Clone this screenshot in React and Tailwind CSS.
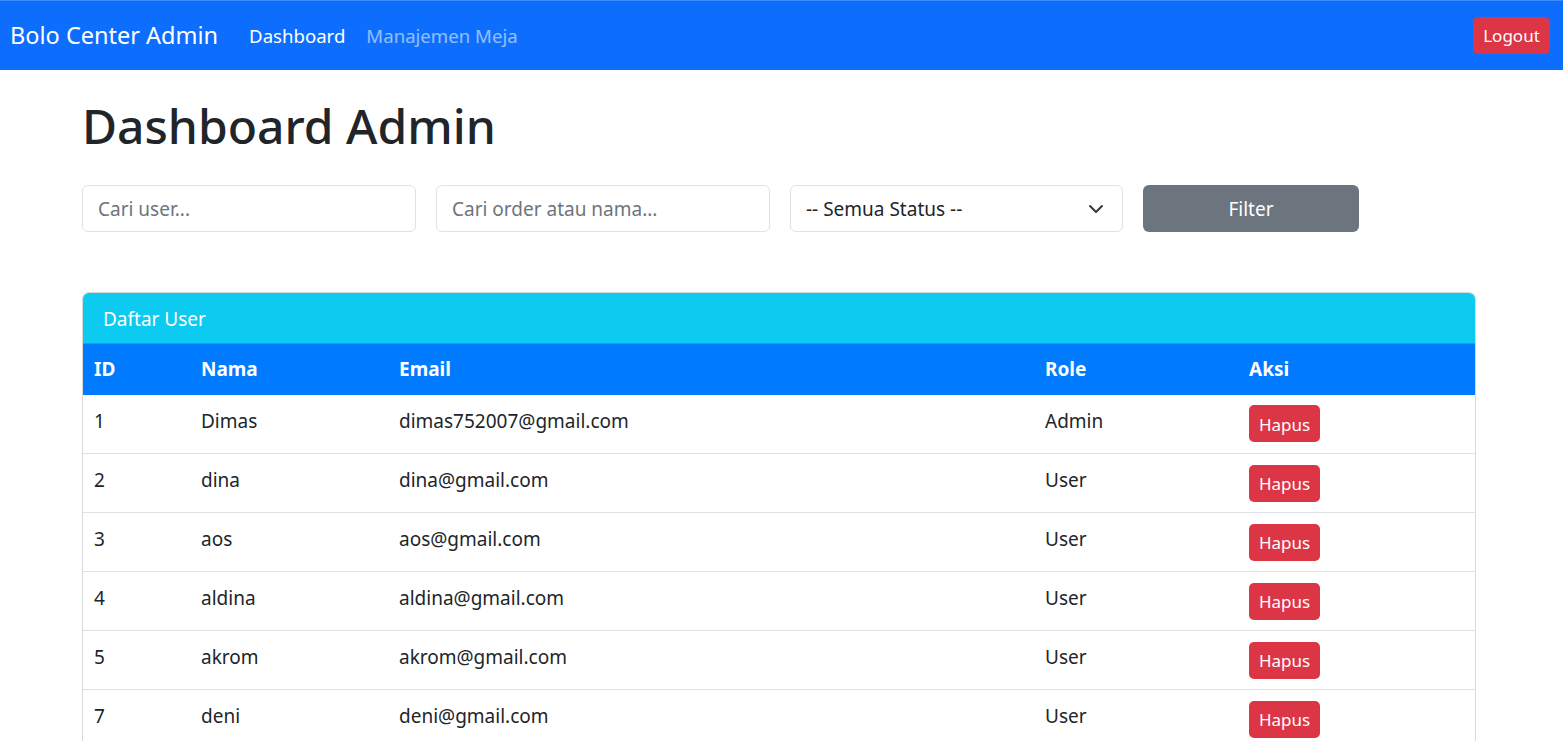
import React from 'react'

const users = [
  { id: 1, nama: 'Dimas', email: 'dimas752007@gmail.com', role: 'Admin' },
  { id: 2, nama: 'dina', email: 'dina@gmail.com', role: 'User' },
  { id: 3, nama: 'aos', email: 'aos@gmail.com', role: 'User' },
  { id: 4, nama: 'aldina', email: 'aldina@gmail.com', role: 'User' },
  { id: 5, nama: 'akrom', email: 'akrom@gmail.com', role: 'User' },
  { id: 7, nama: 'deni', email: 'deni@gmail.com', role: 'User' },
]

const App = () => {
  return (
    <div className="min-h-screen bg-white text-[#212529] font-['Noto_Sans',sans-serif]">
      <nav className="flex h-[70px] items-center bg-[#0d6efd] border-t border-[#3d8bfd] pl-[10px] pr-[13px]">
        <span className="text-[23.5px] text-white mr-[31px] pt-[1px]">Bolo Center Admin</span>
        <div className="flex gap-[21px] text-[18.6px] pt-[1px]">
          <span className="text-white">Dashboard</span>
          <span className="text-white/55">Manajemen Meja</span>
        </div>
        <button className="ml-auto h-[37px] w-[77px] rounded-[5px] bg-[#dc3545] text-[17px] text-white">
          Logout
        </button>
      </nav>

      <main className="pl-[82px] pt-[27px] pb-[40px] w-[1476px]">
        <h1 className="text-[48px] font-medium leading-[1.2] mb-[30px]">Dashboard Admin</h1>

        <div className="flex gap-[20px] mb-[60px]">
          <input
            className="h-[47px] w-[334px] rounded-[6px] border border-[#dee2e6] px-[15px] pt-[2px] text-[19px] placeholder:text-[#6c757d] outline-none"
            placeholder="Cari user..."
          />
          <input
            className="h-[47px] w-[334px] rounded-[6px] border border-[#dee2e6] px-[15px] pt-[2px] text-[19px] placeholder:text-[#6c757d] outline-none"
            placeholder="Cari order atau nama..."
          />
          <div className="flex h-[47px] w-[333px] items-center justify-between rounded-[6px] border border-[#dee2e6] pl-[15px] pr-[18px] pt-[2px] text-[19px]">
            <span>-- Semua Status --</span>
            <svg width="16" height="16" viewBox="0 0 16 16" fill="none" stroke="#343a40" strokeWidth="2" strokeLinecap="round" strokeLinejoin="round">
              <path d="M2 5l6 6 6-6" />
            </svg>
          </div>
          <button className="h-[47px] w-[216px] rounded-[6px] bg-[#6c757d] pt-[2px] text-[19px] text-white">Filter</button>
        </div>

        <div className="w-[1394px] overflow-hidden rounded-[7px] border border-black/15">
          <div className="h-[51px] flex items-center bg-[#0dcaf0] px-[20px] pt-[3px] text-[19px] text-white border-b border-black/15">
            Daftar User
          </div>
          <table className="w-full table-fixed border-collapse text-[19px]">
            <colgroup>
              <col className="w-[107px]" />
              <col className="w-[198px]" />
              <col className="w-[646px]" />
              <col className="w-[204px]" />
              <col />
            </colgroup>
            <thead>
              <tr className="h-[51px] bg-[#007bff] text-white text-left">
                <th className="px-[11px] font-bold">ID</th>
                <th className="px-[11px] font-bold">Nama</th>
                <th className="px-[11px] font-bold">Email</th>
                <th className="px-[11px] font-bold">Role</th>
                <th className="px-[11px] font-bold">Aksi</th>
              </tr>
            </thead>
            <tbody>
              {users.map((u) => (
                <tr key={u.id} className="h-[59px] border-b border-[#dee2e6]">
                  <td className="px-[11px] pb-[5px]">{u.id}</td>
                  <td className="px-[11px] pb-[5px]">{u.nama}</td>
                  <td className="px-[11px] pb-[5px]">{u.email}</td>
                  <td className="px-[11px] pb-[5px]">{u.role}</td>
                  <td className="px-[11px]">
                    <button className="h-[37px] w-[71px] rounded-[5px] bg-[#dc3545] pt-[1px] text-[17px] text-white">
                      Hapus
                    </button>
                  </td>
                </tr>
              ))}
            </tbody>
          </table>
        </div>
      </main>
    </div>
  )
}

export default App
